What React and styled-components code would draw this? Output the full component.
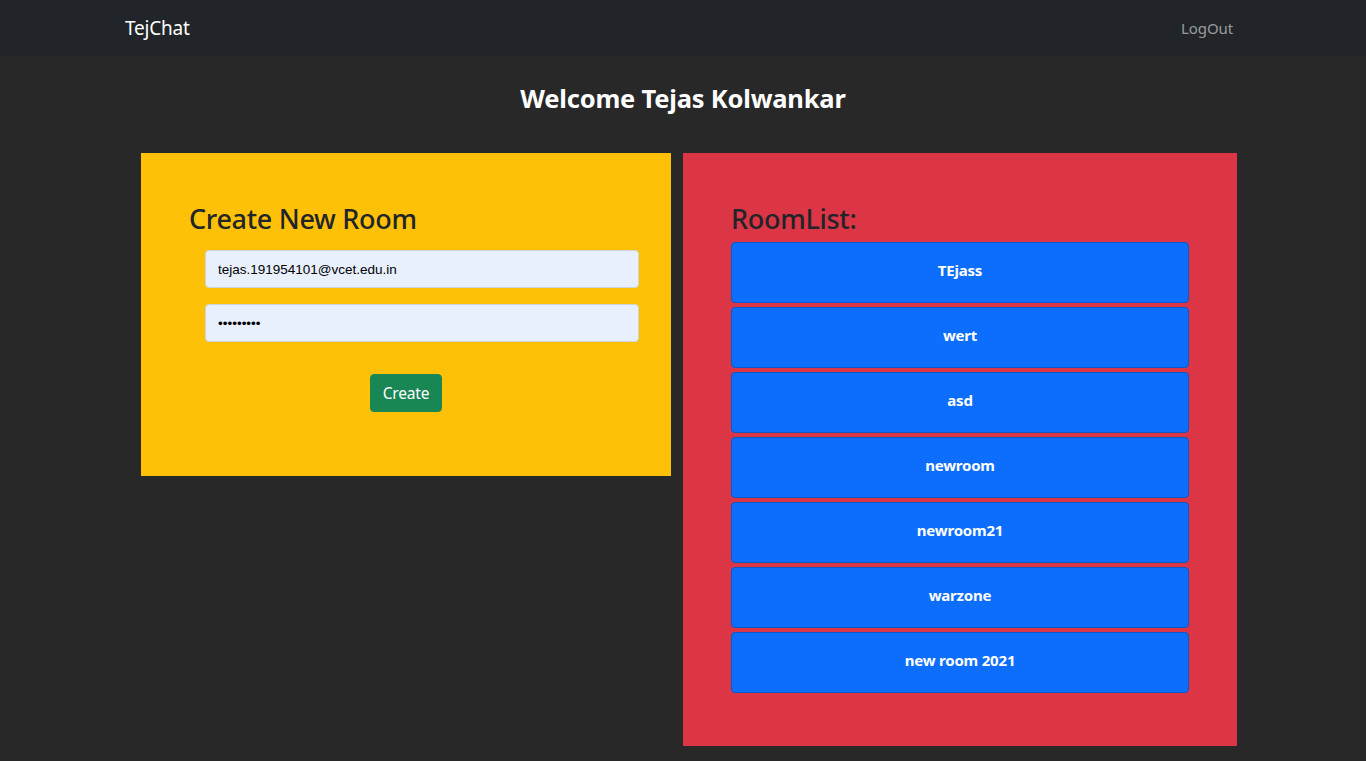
import styled, { createGlobalStyle } from "styled-components";

const GlobalStyle = createGlobalStyle`
  body {
    margin: 0;
    background: #282828;
    font-family: "Noto Sans", "Open Sans", sans-serif;
    color: #212529;
  }
`;

const rooms = ["TEjass", "wert", "asd", "newroom", "newroom21", "warzone", "new room 2021"];

function App() {
    return (
        <>
            <GlobalStyle />
            <NavBar>
                <NavInner>
                    <Brand>TejChat</Brand>
                    <NavLink>LogOut</NavLink>
                </NavInner>
            </NavBar>
            <Welcome>Welcome Tejas Kolwankar</Welcome>
            <Panels>
                <CreatePanel>
                    <PanelTitle>Create New Room</PanelTitle>
                    <Form>
                        <Input type="text" defaultValue="tejas.191954101@vcet.edu.in" />
                        <Input type="password" defaultValue="123456789" />
                        <CreateButton>Create</CreateButton>
                    </Form>
                </CreatePanel>
                <RoomPanel>
                    <PanelTitle>RoomList:</PanelTitle>
                    <RoomList>
                        {rooms.map((room) => (
                            <RoomButton key={room}>{room}</RoomButton>
                        ))}
                    </RoomList>
                </RoomPanel>
            </Panels>
        </>
    )
}

export default App

const NavBar = styled.nav`
  background: #212529;
  height: 56px;
  display: flex;
  align-items: center;
`;

const NavInner = styled.div`
  width: 1140px;
  margin: 0 auto;
  padding: 0 12px;
  box-sizing: border-box;
  display: flex;
  justify-content: space-between;
  align-items: center;
`;

const Brand = styled.a`
  color: #fff;
  font-size: 19px;
  letter-spacing: -0.2px;
`;

const NavLink = styled.a`
  color: rgba(255, 255, 255, 0.55);
  font-size: 15px;
  padding: 8px;
  letter-spacing: -0.1px;
`;

const Welcome = styled.h3`
  margin: 23px 0 0;
  height: 63px;
  line-height: 38px;
  text-align: center;
  color: #fff;
  font-size: 25.5px;
  font-weight: 700;
  letter-spacing: -0.2px;
`;

const Panels = styled.div`
  display: flex;
  align-items: flex-start;
  gap: 12px;
  margin-top: 11px;
  margin-left: calc(50% - 542px);
  padding-bottom: 16px;
`;

const CreatePanel = styled.div`
  width: 530px;
  box-sizing: border-box;
  background: #ffc107;
  padding: 46px 48px 64px 48px;
`;

const RoomPanel = styled.div`
  width: 554px;
  box-sizing: border-box;
  background: #dc3545;
  padding: 46px 48px 53px 48px;
`;

const PanelTitle = styled.h2`
  margin: 0 0 8px;
  font-size: 27px;
  line-height: 40px;
  font-weight: 500;
  letter-spacing: -0.3px;
  color: #212529;
`;

const Form = styled.div`
  display: flex;
  flex-direction: column;
  align-items: center;
  gap: 16px;
  margin-top: 11px;
`;

const Input = styled.input`
  width: 100%;
  height: 38px;
  box-sizing: border-box;
  margin-left: 32px;
  background: #e8f0fe;
  border: 1px solid #ced4da;
  border-radius: 4px;
  padding: 0 12px;
  font-family: "Liberation Sans", Arial, sans-serif;
  font-size: 13.5px;
  color: #000;
  outline: none;
`;

const CreateButton = styled.button`
  margin-top: 16px;
  height: 38px;
  padding: 0 12px;
  background: #198754;
  border: 1px solid #198754;
  border-radius: 4px;
  color: #fff;
  font-family: "Noto Sans", sans-serif;
  font-size: 15.5px;
  letter-spacing: -0.2px;
`;

const RoomList = styled.div`
  display: flex;
  flex-direction: column;
  gap: 4px;
  margin-top: -5px;
`;

const RoomButton = styled.button`
  height: 61px;
  width: 100%;
  padding: 0 0 5px;
  background: #0d6efd;
  border: 1px solid #0a58ca;
  border-radius: 4px;
  color: #fff;
  font-family: "Noto Sans", sans-serif;
  font-size: 15px;
  font-weight: 700;
  letter-spacing: -0.2px;
`;
